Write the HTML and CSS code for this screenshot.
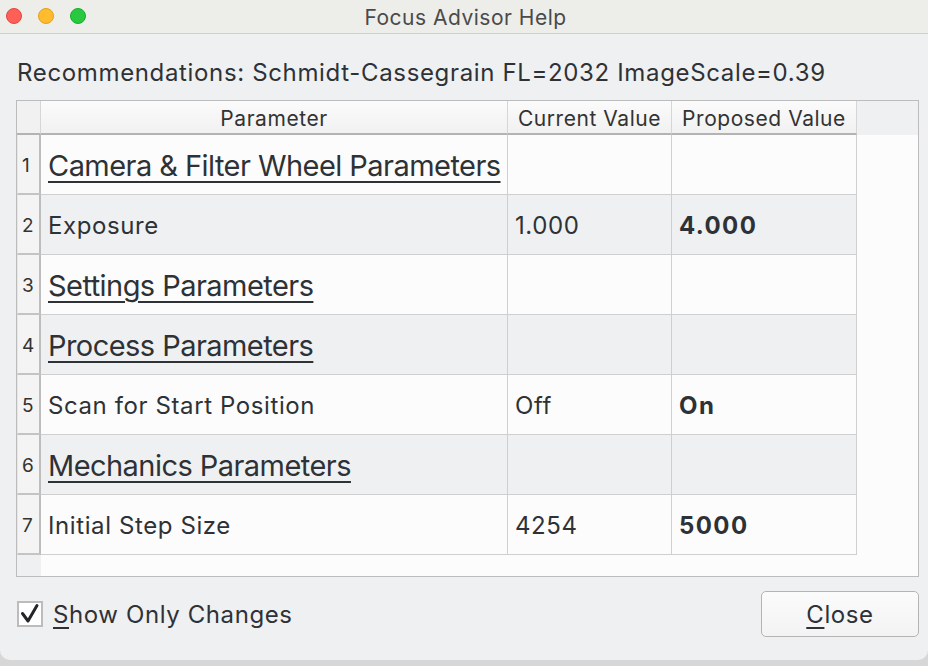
FILE: index.html
```html
<!DOCTYPE html>
<html>
<head>
<meta charset="utf-8">
<link rel="stylesheet" href="styles.css">
</head>
<body>
<div class="window">
  <div class="titlebar">
    <div class="lights">
      <span class="light red"></span>
      <span class="light yellow"></span>
      <span class="light green"></span>
    </div>
    <div class="title">Focus Advisor Help</div>
  </div>
  <div class="content">
    <div class="reco">Recommendations: Schmidt-Cassegrain FL=2032 ImageScale=0.39</div>
    <div class="frame">
      <div class="grid">
        <div class="hcell corner"></div>
        <div class="hcell">Parameter</div>
        <div class="hcell">Current Value</div>
        <div class="hcell">Proposed Value</div>
        <div class="hfill"></div>

        <div class="rh">1</div>
        <div class="cell odd"><span class="heading">Camera &amp; Filter Wheel Parameters</span></div>
        <div class="cell odd"></div>
        <div class="cell odd"></div>
        <div class="fill"></div>

        <div class="rh">2</div>
        <div class="cell even">Exposure</div>
        <div class="cell even">1.000</div>
        <div class="cell even bold">4.000</div>
        <div class="fill"></div>

        <div class="rh">3</div>
        <div class="cell odd"><span class="heading">Settings Parameters</span></div>
        <div class="cell odd"></div>
        <div class="cell odd"></div>
        <div class="fill"></div>

        <div class="rh">4</div>
        <div class="cell even"><span class="heading">Process Parameters</span></div>
        <div class="cell even"></div>
        <div class="cell even"></div>
        <div class="fill"></div>

        <div class="rh">5</div>
        <div class="cell odd">Scan for Start Position</div>
        <div class="cell odd">Off</div>
        <div class="cell odd bold">On</div>
        <div class="fill"></div>

        <div class="rh">6</div>
        <div class="cell even"><span class="heading">Mechanics Parameters</span></div>
        <div class="cell even"></div>
        <div class="cell even"></div>
        <div class="fill"></div>

        <div class="rh">7</div>
        <div class="cell odd">Initial Step Size</div>
        <div class="cell odd">4254</div>
        <div class="cell odd bold">5000</div>
        <div class="fill"></div>

        <div class="rh-empty"></div>
        <div class="empty"></div>
      </div>
    </div>
    <div class="bottom">
      <label class="check">
        <span class="box">
          <svg width="22" height="22" viewBox="0 0 22 22"><path d="M3.5 10.5 L9 18 L18 2.5" fill="none" stroke="#232629" stroke-width="3" stroke-linecap="round" stroke-linejoin="round"/></svg>
        </span>
        <span class="check-label"><u>S</u>how Only Changes</span>
      </label>
      <button class="btn"><u>C</u>lose</button>
    </div>
  </div>
</div>
</body>
</html>
```
FILE: styles.css
```css
html, body {
  margin: 0;
  padding: 0;
}
body {
  width: 928px;
  height: 666px;
  background: #d7d7d7;
  font-family: Inter, "Noto Sans", sans-serif;
  color: #2e3236;
  overflow: hidden;
}
.window {
  width: 928px;
  height: 660px;
  background: #eff0f2;
  border-radius: 0 0 10px 10px;
  display: flex;
  flex-direction: column;
  overflow: hidden;
}
.titlebar {
  height: 34px;
  box-sizing: border-box;
  background: #ededea;
  border-bottom: 1px solid #cfcfcf;
  display: flex;
  align-items: center;
  justify-content: center;
  position: relative;
}
.lights {
  position: absolute;
  left: 6px;
  top: 8px;
  display: flex;
  gap: 16px;
}
.light {
  width: 14px;
  height: 14px;
  border-radius: 50%;
  display: block;
}
.red { background: #fe5f57; border: 0.5px solid #e2463f; }
.yellow { background: #febc2e; border: 0.5px solid #e1a116; }
.green { background: #28c840; border: 0.5px solid #14ae2a; }
.title {
  font-size: 21px;
  letter-spacing: 0.5px;
  color: #4a4a4a;
  padding-top: 1px;
  padding-left: 3px;
}
.content {
  flex: 1;
  display: flex;
  flex-direction: column;
  padding: 0 9px 0 16px;
}
.reco {
  font-size: 24px;
  letter-spacing: 0.65px;
  height: 30px;
  line-height: 30px;
  margin-top: 24px;
  margin-bottom: 12px;
  padding-left: 1px;
}
.frame {
  border: 1px solid #bcbcbc;
  background: #fcfcfc;
  height: 477px;
  box-sizing: border-box;
}
.grid {
  display: grid;
  grid-template-columns: 24px 467px 164px 185px 1fr;
  grid-template-rows: 34px repeat(7, 60px) 1fr;
  height: 100%;
}
.hcell {
  background: linear-gradient(#fbfbfb, #f1f1f1);
  border-right: 1px solid #d6d6d6;
  border-bottom: 2px solid #b3b3b3;
  font-size: 21px;
  letter-spacing: 0.55px;
  color: #333;
  display: flex;
  align-items: center;
  justify-content: center;
  box-sizing: border-box;
  padding-top: 3px;
}
.hcell.corner {
  background: #f1f1f1;
  border-right: 1px solid #d6d6d6;
}
.hfill {
  background: #eff0f2;
}
.rh {
  background: #f4f4f4;
  border-left: 1px solid #e6e6e6;
  border-right: 2px solid #bdbdbd;
  border-bottom: 2px solid #c4c4c4;
  box-sizing: border-box;
  font-size: 19px;
  display: flex;
  align-items: center;
  padding-left: 4px;
  padding-top: 2px;
  color: #333;
}
.cell {
  border-right: 1px solid #cfcfcf;
  border-bottom: 1px solid #cfcfcf;
  box-sizing: border-box;
  font-size: 24px;
  letter-spacing: 0.6px;
  display: flex;
  align-items: center;
  padding-left: 7px;
  padding-top: 1px;
}
.cell.odd { background: #fcfcfc; }
.cell.even { background: #eff0f2; }
.cell.bold { font-weight: 700; letter-spacing: 1.4px; }
.heading {
  font-size: 29px;
  letter-spacing: -0.55px;
  text-decoration: underline;
  text-decoration-thickness: 2px;
  text-underline-offset: 5px;
}
.fill { background: #fcfcfc; }
.rh-empty { background: #eff0f2; }
.empty { grid-column: 2 / 6; background: #fcfcfc; }
.bottom {
  display: flex;
  justify-content: space-between;
  align-items: center;
  margin-top: 14px;
}
.check {
  display: flex;
  align-items: center;
  gap: 10px;
  margin-left: 1px;
}
.box {
  width: 26px;
  height: 26px;
  box-sizing: border-box;
  border: 2px solid #bcbcbc;
  background: #ffffff;
  display: flex;
  align-items: center;
  justify-content: center;
}
.box svg { display: block; }
.check-label {
  font-size: 24px;
  letter-spacing: 0.6px;
}
.check-label u, .btn u {
  text-decoration-thickness: 1.5px;
  text-underline-offset: 4px;
}
.btn {
  width: 158px;
  height: 46px;
  border: 1px solid #b4b4b4;
  border-radius: 5px;
  background: linear-gradient(#fbfbfb, #f3f3f3);
  font-family: Inter, "Noto Sans", sans-serif;
  font-size: 24px;
  letter-spacing: 0.6px;
  color: #2e3236;
  padding: 0;
}
```
